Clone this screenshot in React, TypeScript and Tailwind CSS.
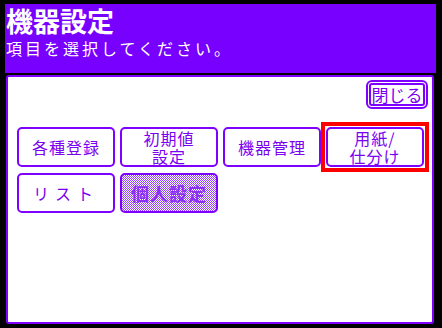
import React from 'react'

const font = { fontFamily: '"Noto Sans CJK JP", "Noto Sans", sans-serif' }

function MenuButton({ children, active }: { children: React.ReactNode; active?: boolean }) {
  return (
    <div className="relative">
      <button className="flex h-[40px] w-[98px] flex-col items-center justify-center rounded-[5px] border-2 border-[#8000ff] bg-white text-[16px] leading-[18px] tracking-[1px] text-[#7a00f0]">
        {children}
      </button>
      {active && <div className="pointer-events-none absolute -inset-[5px] border-[4px] border-[#ff0000]" />}
    </div>
  )
}

function App() {
  return (
    <div className="flex h-[328px] w-[442px] flex-col bg-black pl-[5px] pr-[6px] pt-[4px]" style={font}>
      {/* title bar */}
      <div className="flex h-[69px] flex-col bg-[#7800ff] px-[1px] text-white">
        <div className="text-[27px] font-bold leading-[34px]">機器設定</div>
        <div className="mt-[1px] text-[16px] leading-[18px] tracking-[3px]">項目を選択してください。</div>
      </div>

      {/* main panel */}
      <div className="ml-[1px] mr-[2px] mt-[2px] flex h-[249px] flex-col rounded-[3px] border-2 border-[#8000ff] bg-white">
        <div className="flex justify-end pr-[4px] pt-[3px]">
          <button className="rounded-[6px] border-2 border-[#8000ff] p-[1px]">
            <div className="flex h-[23px] w-[56px] items-center justify-center rounded-[3px] border-2 border-[#8000ff] text-[17px] leading-[19px] text-[#7a00f0]">
              閉じる
            </div>
          </button>
        </div>

        <div className="mt-[18px] flex flex-col gap-[6px] pl-[9px]">
          <div className="flex gap-[5px]">
            <MenuButton>各種登録</MenuButton>
            <MenuButton>
              <span>初期値</span>
              <span>設定</span>
            </MenuButton>
            <MenuButton>機器管理</MenuButton>
            <MenuButton active>
              <span>用紙/</span>
              <span>仕分け</span>
            </MenuButton>
          </div>
          <div className="flex gap-[5px]">
            <MenuButton>
              <span className="tracking-[6px]">リスト</span>
            </MenuButton>
            <button className="flex h-[40px] w-[98px] items-center justify-center rounded-[5px] border-2 border-[#8000ff] bg-[repeating-conic-gradient(#9a40ff_0_25%,#ffffff_0_50%)] bg-[length:2px_2px] text-[18px] font-bold tracking-[1px] text-[#8a30f0]">
              個人設定
            </button>
          </div>
        </div>
      </div>
    </div>
  )
}

export default App
